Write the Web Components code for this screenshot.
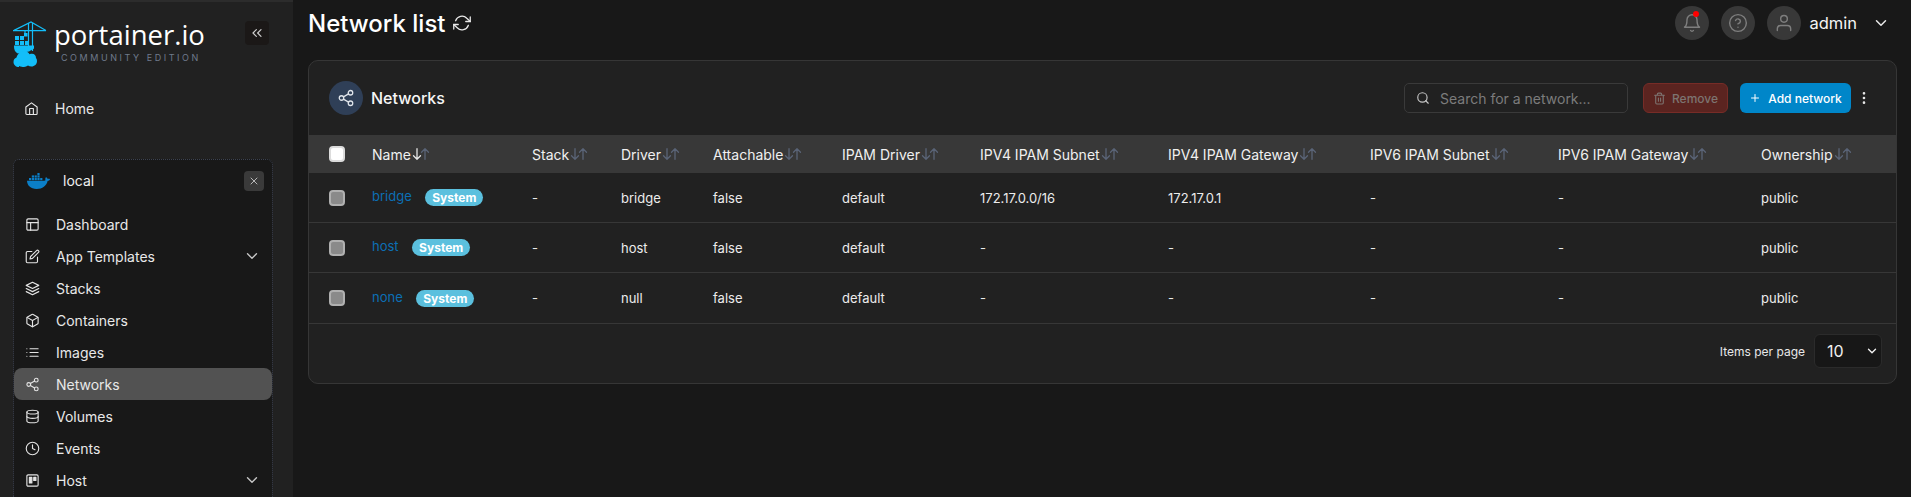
<!DOCTYPE html>
<html>
<head>
<meta charset="utf-8">
<title>Network list</title>
<style>
  html, body { margin: 0; height: 100%; background: #181818; overflow: hidden; }
  body { font-family: Inter, "Liberation Sans", sans-serif; color: #f3f3f3; }
</style>
</head>
<body>
<pt-app></pt-app>
<script>
const ICONS = {
  home: '<path d="M3 9.500 12 3l9 6.500V20a1.500 1.500 0 0 1-1.500 1.500h-15A1.500 1.500 0 0 1 3 20z"/><path d="M9 21.500V12h6v9.500"/>',
  layout: '<rect x="3" y="3" width="18" height="18" rx="2"/><path d="M3 9h18M9 21V9"/>',
  edit: '<path d="M11 4H4a2 2 0 0 0-2 2v14a2 2 0 0 0 2 2h14a2 2 0 0 0 2-2v-7"/><path d="M18.500 2.500a2.120 2.120 0 0 1 3 3L12 15l-4 1 1-4z"/>',
  layers: '<path d="M12 2 2 7l10 5 10-5z"/><path d="m2 12 10 5 10-5"/><path d="m2 17 10 5 10-5"/>',
  box: '<path d="M21 16V8a2 2 0 0 0-1-1.730l-7-4a2 2 0 0 0-2 0l-7 4A2 2 0 0 0 3 8v8a2 2 0 0 0 1 1.730l7 4a2 2 0 0 0 2 0l7-4A2 2 0 0 0 21 16z"/><path d="M3.300 7 12 12l8.700-5M12 22V12"/>',
  list: '<path d="M8 6h13M8 12h13M8 18h13M3 6h.01M3 12h.01M3 18h.01"/>',
  share: '<circle cx="18" cy="5" r="3"/><circle cx="6" cy="12" r="3"/><circle cx="18" cy="19" r="3"/><path d="m8.600 13.500 6.800 4M15.400 6.500l-6.800 4"/>',
  database: '<ellipse cx="12" cy="5" rx="9" ry="3"/><path d="M21 12c0 1.660-4 3-9 3s-9-1.340-9-3"/><path d="M3 5v14c0 1.660 4 3 9 3s9-1.340 9-3V5"/>',
  clock: '<circle cx="12" cy="12" r="10"/><path d="M12 6v6l4 2"/>',
  trello: '<rect x="3" y="3" width="18" height="18" rx="2"/><rect x="7" y="7" width="4" height="9" fill="currentColor"/><rect x="14" y="7" width="3.500" height="5" fill="currentColor"/>',
  down: '<path d="m6 9 6 6 6-6"/>',
  x: '<path d="M18 6 6 18M6 6l12 12"/>',
  chevronsLeft: '<path d="m11 17-5-5 5-5M18 17l-5-5 5-5"/>',
  bell: '<path d="M18 8a6 6 0 0 0-12 0c0 7-3 9-3 9h18s-3-2-3-9"/><path d="M13.700 21a2 2 0 0 1-3.400 0"/>',
  help: '<circle cx="12" cy="12" r="10"/><path d="M9.100 9a3 3 0 0 1 5.800 1c0 2-3 3-3 3M12 17h.01"/>',
  user: '<path d="M20 21v-2a4 4 0 0 0-4-4H8a4 4 0 0 0-4 4v2"/><circle cx="12" cy="7" r="4"/>',
  search: '<circle cx="11" cy="11" r="8"/><path d="m21 21-4.300-4.300"/>',
  trash: '<path d="M3 6h18M19 6v14a2 2 0 0 1-2 2H7a2 2 0 0 1-2-2V6M8 6V4a2 2 0 0 1 2-2h4a2 2 0 0 1 2 2v2M10 11v6M14 11v6"/>',
  plus: '<path d="M12 5v14M5 12h14"/>',
  kebab: '<circle cx="12" cy="5" r="1"/><circle cx="12" cy="12" r="1"/><circle cx="12" cy="19" r="1"/>',
  refresh: '<path d="M23 4v6h-6M1 20v-6h6"/><path d="M3.500 9a9 9 0 0 1 14.900-3.400L23 10M1 14l4.600 4.400A9 9 0 0 0 20.500 15"/>',
  arrowDown: '<path d="M12 3v18M6 15l6 6 6-6"/>',
  arrowUp: '<path d="M12 21V3M6 9l6-6 6 6"/>'
};

class UiIcon extends HTMLElement {
  connectedCallback() {
    const size = this.getAttribute("size") || 14;
    const sw = this.getAttribute("stroke") || 2;
    this.attachShadow({mode: "open"}).innerHTML = `
      <style>:host { display: inline-flex; flex: none; } svg { display: block; }</style>
      <svg width="${size}" height="${size}" viewBox="0 0 24 24" fill="none" stroke="currentColor"
        stroke-width="${sw}" stroke-linecap="round" stroke-linejoin="round">${ICONS[this.getAttribute("name")]}</svg>`;
  }
}
customElements.define("ui-icon", UiIcon);

class PtLogo extends HTMLElement {
  connectedCallback() {
    this.attachShadow({mode: "open"}).innerHTML = `
      <style>
        :host { display: flex; align-items: flex-start; gap: 7px; }
        .words { display: flex; flex-direction: column; margin-top: -1px; }
        .name { font: 400 27.500px/30px "Open Sans", sans-serif; color: #fff; white-space: nowrap; }
        .ed { font: 400 9px/10px Inter, sans-serif; color: #6f7a8c; letter-spacing: 2.550px; margin: 3px 0 0 7px; white-space: nowrap; }
      </style>
      <svg width="34" height="47" viewBox="0 0 34 47" fill="none">
        <g stroke="#13bef9" stroke-width="1.200">
          <path d="M0 9.600h33M1 9.400 18 1l15 8.400"/>
          <path d="M15.500 2v28M19.500 2v28"/>
          <path d="M12 9.600v4"/>
        </g>
        <rect x="11" y="12" width="3.500" height="3.500" fill="#13bef9"/>
        <g fill="#13bef9">
          <rect x="2" y="15" width="4" height="4"/><rect x="7" y="15" width="4" height="4"/>
          <rect x="2" y="20" width="4" height="4"/><rect x="7" y="20" width="4" height="4"/><rect x="12" y="20" width="3" height="4"/>
          <path d="M1 24.500h20v3l-5 3-11 2C2 31 1 29 1 24.500z"/>
          <path d="M6 46c-3.200 0-5.500-2.100-5.500-5 0-2.200 1.300-3.800 3-4.400C4.500 33 7.500 30 11 30c2.700 0 4.700 1.300 5.500 3.200 1-.4 1.700-.5 2.500-.5 2.500 0 4 1.800 4 4.300.7.800 1 1.800 1 3 0 3.200-2.500 5.500-5.500 5.500-1.300 0-2.600-.3-3.500-.9-1.300.9-2.600 1.400-4 1.400-1.700 0-3-.2-5-.999z"/>
        </g>
      </svg>
      <div class="words"><div class="name">portainer.io</div><div class="ed">COMMUNITY EDITION</div></div>`;
  }
}
customElements.define("pt-logo", PtLogo);

class SideItem extends HTMLElement {
  connectedCallback() {
    const more = this.hasAttribute("more");
    this.attachShadow({mode: "open"}).innerHTML = `
      <style>
        :host { display: flex; align-items: center; height: 32px; padding: 0 11px; font-size: 14px; color: #e8e8e8; border-radius: 8px; }
        :host([active]) { background: #525252; }
        ui-icon { color: #e4e4e4; margin-right: 16px; }
        .t { flex: 1; }
        ui-icon.c { color: #c8c8c8; margin: 0; }
      </style>
      <ui-icon name="${this.getAttribute("icon")}" size="15" stroke="1.800"></ui-icon>
      <span class="t"><slot></slot></span>
      ${more ? '<ui-icon class="c" name="down" size="18" stroke="1.800"></ui-icon>' : ""}`;
  }
}
customElements.define("side-item", SideItem);

class PtSidebar extends HTMLElement {
  connectedCallback() {
    this.attachShadow({mode: "open"}).innerHTML = `
      <style>
        :host { display: flex; flex-direction: column; flex: none; box-sizing: border-box; width: 293px; height: 100%; background: #212121; border-top: 2px solid #2c2c2c; overflow: hidden; }
        .brand { display: flex; align-items: flex-start; padding: 19px 24px 0 13px; height: 59px; }
        pt-logo { flex: 1; }
        .collapse { width: 24px; height: 24px; border-radius: 4px; background: #1b1817; color: #cfcfcf; display: flex; align-items: center; justify-content: center; }
        .home { display: flex; align-items: center; height: 32px; margin-top: 12px; padding-left: 24px; font-size: 14px; color: #e8e8e8; }
        .home ui-icon { margin-right: 16px; }
        .env { margin: 35px 20px 0 13px; flex: 1; background: #181818; border: 1px dotted #3c4250; border-bottom: 0; border-radius: 6px 6px 0 0; }
        .local { display: flex; align-items: center; height: 21px; margin: 10px 0 0; padding: 0 8px 0 13px; font-size: 14px; color: #f0f0f0; }
        .local span { flex: 1; margin-left: 13px; }
        .close { width: 20px; height: 20px; border-radius: 4px; background: #3a3a3a; color: #d8d8d8; display: flex; align-items: center; justify-content: center; }
        .items { margin-top: 17px; }
      </style>
      <div class="brand">
        <pt-logo></pt-logo>
        <div class="collapse"><ui-icon name="chevronsLeft" size="16" stroke="1.800"></ui-icon></div>
      </div>
      <div class="home"><ui-icon name="home" size="15" stroke="1.800"></ui-icon>Home</div>
      <div class="env">
        <div class="local">
          <svg width="23" height="16" viewBox="0 0 23 16" fill="#0b7fc8">
            <path d="M0 7.800h17.200c.6-.1 1.100-.4 1.300-.6-.3-1-.3-2.300.5-3 1 .3 1.500 1 1.700 1.800 1 -.3 1.900-.2 2.300.2-.4 1-1.300 1.700-2.400 1.800C19.500 12.500 15.500 16 9.700 16 3.500 16 .2 12.500 0 7.800z"/>
            <rect x="2" y="5" width="2.200" height="2.200"/><rect x="4.800" y="5" width="2.200" height="2.200"/><rect x="7.600" y="5" width="2.200" height="2.200"/><rect x="10.400" y="5" width="2.200" height="2.200"/><rect x="13.200" y="5" width="2.200" height="2.200"/>
            <rect x="4.800" y="2.400" width="2.200" height="2.200"/><rect x="7.600" y="2.400" width="2.200" height="2.200"/><rect x="10.400" y="2.400" width="2.200" height="2.200"/>
            <rect x="10.400" y="0" width="2.200" height="2.200"/>
          </svg>
          <span>local</span>
          <div class="close"><ui-icon name="x" size="12" stroke="1.600"></ui-icon></div>
        </div>
        <div class="items">
          <side-item icon="layout">Dashboard</side-item>
          <side-item icon="edit" more>App Templates</side-item>
          <side-item icon="layers">Stacks</side-item>
          <side-item icon="box">Containers</side-item>
          <side-item icon="list">Images</side-item>
          <side-item icon="share" active>Networks</side-item>
          <side-item icon="database">Volumes</side-item>
          <side-item icon="clock">Events</side-item>
          <side-item icon="trello" more>Host</side-item>
        </div>
      </div>`;
  }
}
customElements.define("pt-sidebar", PtSidebar);

class PtTopbar extends HTMLElement {
  connectedCallback() {
    this.attachShadow({mode: "open"}).innerHTML = `
      <style>
        :host { display: flex; align-items: center; height: 60px; box-sizing: border-box; padding: 0 7px 14px 8px; }
        h1 { font: 500 24px/29px Inter, sans-serif; margin: 0; color: #fff; }
        .refresh { margin-left: 8px; color: #e8e8e8; }
        .right { margin-left: auto; display: flex; align-items: center; }
        .round { position: relative; width: 34px; height: 34px; border-radius: 50%; background: #383838; color: #7e7e7e; display: flex; align-items: center; justify-content: center; margin-right: 12px; }
        .dot { position: absolute; top: 5px; left: 18px; width: 6px; height: 6px; border-radius: 50%; background: #f00; }
        .admin { font-size: 16.500px; color: #f4f4f4; margin: 0 15px 0 -4px; }
        .chev { color: #e8e8e8; }
      </style>
      <h1>Network list</h1>
      <ui-icon class="refresh" name="refresh" size="18" stroke="1.700"></ui-icon>
      <div class="right">
        <div class="round"><ui-icon name="bell" size="20" stroke="1.700"></ui-icon><span class="dot"></span></div>
        <div class="round"><ui-icon name="help" size="20" stroke="1.700"></ui-icon></div>
        <div class="round"><ui-icon name="user" size="20" stroke="1.700"></ui-icon></div>
        <span class="admin">admin</span>
        <ui-icon class="chev" name="down" size="18" stroke="2"></ui-icon>
      </div>`;
  }
}
customElements.define("pt-topbar", PtTopbar);

class SortHead extends HTMLElement {
  connectedCallback() {
    const on = this.hasAttribute("on");
    this.attachShadow({mode: "open"}).innerHTML = `
      <style>
        :host { display: inline-flex; align-items: center; font-size: 14px; font-weight: 400; color: #f0f0f0; white-space: nowrap; }
        .a { display: inline-flex; margin-left: -1px; color: #5a6477; }
        .a ui-icon + ui-icon { margin-left: -6px; }
        .on { color: #e8e8e8; }
      </style>
      <slot></slot>
      <span class="a">
        <ui-icon class="${on ? "on" : ""}" name="arrowDown" size="14" stroke="2.200"></ui-icon>
        <ui-icon name="arrowUp" size="14" stroke="2.200"></ui-icon>
      </span>`;
  }
}
customElements.define("sort-head", SortHead);

class SysBadge extends HTMLElement {
  connectedCallback() {
    this.attachShadow({mode: "open"}).innerHTML = `
      <style>
        :host { display: inline-flex; align-items: center; height: 17px; padding: 0 7px; margin-left: 13.500px; border-radius: 9px; background: #5bc0de; color: #fff; font-size: 12px; font-weight: 700; }
      </style><slot></slot>`;
  }
}
customElements.define("sys-badge", SysBadge);

class NetworksCard extends HTMLElement {
  connectedCallback() {
    const cols = ["Stack", "Driver", "Attachable", "IPAM Driver", "IPV4 IPAM Subnet", "IPV4 IPAM Gateway", "IPV6 IPAM Subnet", "IPV6 IPAM Gateway", "Ownership"];
    const rows = [
      ["bridge", "bridge", "172.17.0.0/16", "172.17.0.1"],
      ["host", "host", "-", "-"],
      ["none", "null", "-", "-"]
    ];
    const widths = [63, 160, 89, 92, 129, 138, 188, 202, 188, 203];
    this.attachShadow({mode: "open"}).innerHTML = `
      <style>
        :host { display: block; margin-left: 8px; background: #212121; border: 1px solid #363636; border-radius: 10px; overflow: hidden; }
        .head { display: flex; align-items: center; height: 74px; padding-left: 20px; }
        .ico { width: 34px; height: 34px; border-radius: 50%; background: #2f3f57; color: #dfe4ea; display: flex; align-items: center; justify-content: center; margin-right: 8px; }
        h2 { font: 500 16px/20px Inter, sans-serif; margin: 0; color: #f6f6f6; flex: 1; }
        .search { box-sizing: border-box; display: flex; align-items: center; width: 224px; height: 30px; border: 1px solid #3a3a3a; border-radius: 5px; padding-left: 11px; color: #c4c4c4; margin-right: 15px; }
        .search span { font-size: 14px; color: #7c7c7c; margin-left: 10px; }
        .btn { box-sizing: border-box; display: flex; align-items: center; justify-content: center; height: 30px; border-radius: 6px; font-size: 12px; font-weight: 500; }
        .remove { width: 85px; background: #5b2420; border: 1px solid #772c27; color: #7d7471; gap: 6px; margin-right: 12px; }
        .add { width: 111px; background: #0086c9; color: #fff; gap: 7px; }
        .kebab { margin: 0 24px 0 5px; color: #e8e8e8; }
        table { width: 100%; border-collapse: collapse; table-layout: fixed; font-size: 13px; color: #ececec; }
        th { height: 38px; background: #383838; text-align: left; padding: 0; font-weight: 400; }
        td { height: 49px; padding: 0; border-bottom: 1px solid #373737; }
        tr:last-child td { height: 50px; }
        .cb { display: block; box-sizing: border-box; width: 16px; height: 16px; margin-left: 20px; border-radius: 4px; background: #8a8a8a; border: 2px solid #b0b0b0; }
        th .cb { background: #fff; border-color: #dcdcdc; }
        a { color: #0c6fb5; font-size: 13px; text-decoration: none; position: relative; top: -1px; }
        .foot { box-sizing: border-box; display: flex; align-items: center; justify-content: flex-end; height: 59px; padding: 0 14px 5px 0; font-size: 12px; color: #e8e8e8; }
        .select { box-sizing: border-box; display: flex; align-items: center; justify-content: space-between; width: 68px; height: 34px; margin-left: 9px; padding: 0 2px 0 12px; background: #171717; border: 1px solid #2b2b2b; border-radius: 6px; font-size: 16px; color: #f0f0f0; }
      </style>
      <div class="head">
        <div class="ico"><ui-icon name="share" size="18" stroke="1.700"></ui-icon></div>
        <h2>Networks</h2>
        <div class="search"><ui-icon name="search" size="14"></ui-icon><span>Search for a network...</span></div>
        <div class="btn remove"><ui-icon name="trash" size="13"></ui-icon>Remove</div>
        <div class="btn add"><ui-icon name="plus" size="12"></ui-icon>Add network</div>
        <ui-icon class="kebab" name="kebab" size="16"></ui-icon>
      </div>
      <table>
        <colgroup>${widths.map(w => `<col style="width:${w}px">`).join("")}<col></colgroup>
        <thead><tr>
          <th><span class="cb"></span></th>
          <th><sort-head on>Name</sort-head></th>
          ${cols.map(c => `<th><sort-head>${c}</sort-head></th>`).join("")}
        </tr></thead>
        <tbody>
          ${rows.map(r => `<tr>
            <td><span class="cb"></span></td>
            <td><a>${r[0]}</a><sys-badge>System</sys-badge></td>
            <td>-</td><td>${r[1]}</td><td>false</td><td>default</td>
            <td>${r[2]}</td><td>${r[3]}</td><td>-</td><td>-</td><td>public</td>
          </tr>`).join("")}
        </tbody>
      </table>
      <div class="foot">
        Items per page
        <div class="select"><span>10</span><ui-icon name="down" size="14" stroke="2.400"></ui-icon></div>
      </div>`;
  }
}
customElements.define("networks-card", NetworksCard);

class PtApp extends HTMLElement {
  connectedCallback() {
    this.attachShadow({mode: "open"}).innerHTML = `
      <style>
        :host { display: flex; height: 100vh; }
        main { flex: 1; min-width: 0; padding: 0 14px 0 7px; }
      </style>
      <pt-sidebar></pt-sidebar>
      <main>
        <pt-topbar></pt-topbar>
        <networks-card></networks-card>
      </main>`;
  }
}
customElements.define("pt-app", PtApp);
</script>
</body>
</html>
